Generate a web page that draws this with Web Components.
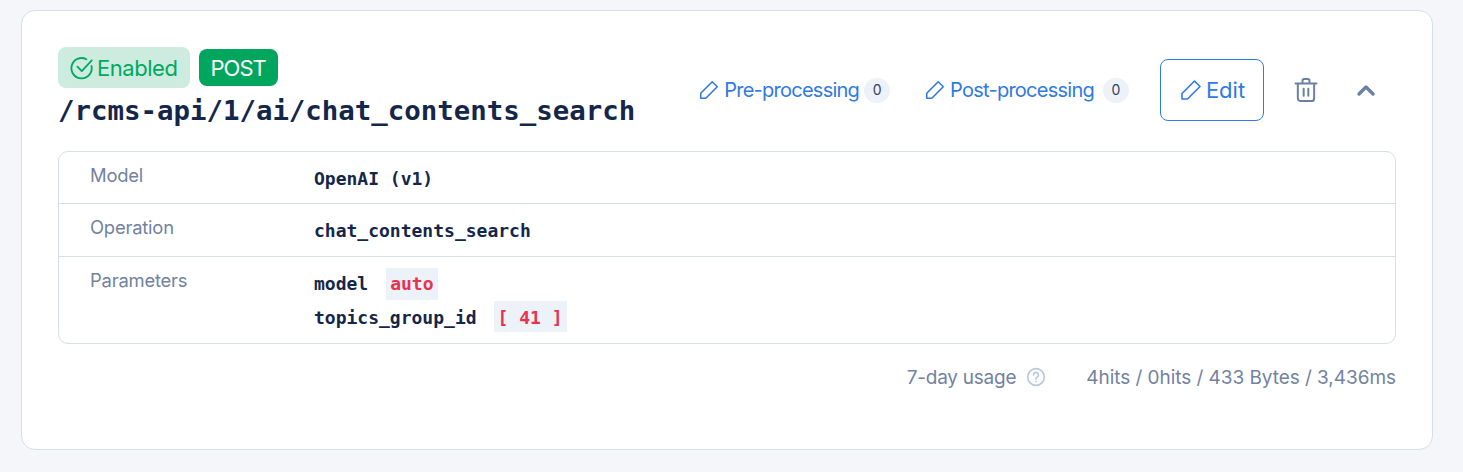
<!DOCTYPE html>
<html><head><meta charset="utf-8"><style>
html,body{margin:0;padding:0;background:#f5f6fa;height:472px;overflow:hidden}
body{font-family:"Inter","Noto Sans",sans-serif;color:#14274a}
</style></head><body>
<template id="t-icon"><style>:host{display:inline-flex;line-height:0}svg{display:block;fill:none;stroke:currentColor;stroke-linecap:round;stroke-linejoin:round}</style><svg></svg></template>
<script>
const ICONS={
 pencil:'<path d="M3 21v-5.5L15.5 3 21 8.5 8.5 21z"/>',
 check:'<path d="M20.8 10.2A9.4 9.4 0 1 1 16 3.9"/><path d="M7.8 10.8l4 4L21 5"/>',
 trash:'<path d="M3 6.5h18M9 6.5V4a1.5 1.5 0 0 1 1.5-1.5h3A1.5 1.5 0 0 1 15 4v2.5M5 6.5V19a2.5 2.5 0 0 0 2.5 2.5h9a2.5 2.5 0 0 0 2.5-2.5V6.5M10 11v6M14 11v6"/>',
 chev:'<path d="M5 16l7-7 7 7"/>',
 help:'<circle cx="12" cy="12" r="10"/><path d="M9 9.5a3 3 0 1 1 4.6 2.5c-1 .6-1.6 1.2-1.6 2.3M12 17.6v.1"/>'
};
class XIcon extends HTMLElement{connectedCallback(){if(this.shadowRoot)return;const r=this.attachShadow({mode:'open'});r.append(document.getElementById('t-icon').content.cloneNode(true));const s=r.querySelector('svg');const z=this.getAttribute('size')||20;s.setAttribute('width',z);s.setAttribute('height',z);s.setAttribute('viewBox','0 0 24 24');s.setAttribute('stroke-width',this.getAttribute('sw')||2);s.innerHTML=ICONS[this.getAttribute('name')];}}
customElements.define('x-icon',XIcon);
function def(tag,html){customElements.define(tag,class extends HTMLElement{constructor(){super();this.attachShadow({mode:'open'}).innerHTML=html;}});}
const SANS='"Inter","Noto Sans",sans-serif';
const MONO='"DejaVu Sans Mono",monospace';
def('x-page',`<style>:host{display:block;padding:10px 30px 22px 21px}</style><slot></slot>`);
def('x-card',`<style>:host{display:block;box-sizing:border-box;height:440px;background:#fff;border:1px solid #d6deea;border-radius:14px;padding:36px 36px 0}</style><slot></slot>`);
def('x-head',`<style>:host{display:flex;align-items:flex-start;justify-content:space-between;height:104px}.l{display:flex;flex-direction:column}.b{display:flex;align-items:center;gap:9px}.a{display:flex;align-items:center;margin-top:12px}</style><div class="l"><div class="b"><slot name="badges"></slot></div><slot name="title"></slot></div><div class="a"><slot></slot></div>`);
def('x-status',`<style>:host{display:inline-flex;align-items:center;gap:2px;height:41px;padding:0 12px 0 11px;box-sizing:border-box;background:#cdecdf;color:#00a862;border-radius:8px;font:22px/1 ${SANS};letter-spacing:-.45px}</style><slot></slot>`);
def('x-method',`<style>:host{display:inline-flex;align-items:center;height:37px;padding:0 12px;box-sizing:border-box;background:#00a65e;color:#fff;border-radius:8px;font:22px/1 ${SANS};letter-spacing:-1px}</style><slot></slot>`);
def('x-title',`<style>:host{display:block;margin-top:3px;font:700 27.4px/40px ${MONO};color:#14274a;white-space:nowrap}</style><slot></slot>`);
def('x-proc',`<style>:host{display:inline-flex;align-items:center;color:#2f7ae5;font:20px/1 ${SANS};letter-spacing:-.75px;gap:4px;margin-right:34px}.n{display:inline-flex;align-items:center;justify-content:center;min-width:26px;height:25px;margin-left:var(--nm,1px);border-radius:13px;background:#edf1f8;color:#33415c;font:14px/1 ${SANS};letter-spacing:0}</style><slot></slot><span class="n"><slot name="n"></slot></span>`);
def('x-edit',`<style>:host{display:inline-flex;align-items:center;justify-content:center;gap:3px;width:104px;height:62px;box-sizing:border-box;border:1px solid #2f7ae5;border-radius:8px;color:#2f7ae5;font:22px/1 ${SANS};letter-spacing:0;margin-right:28px}</style><slot></slot>`);
def('x-table',`<style>:host{display:block;border:1px solid #d6deea;border-radius:10px}</style><slot></slot>`);
def('x-row',`<style>:host{display:grid;grid-template-columns:224px 1fr;box-sizing:border-box;padding-left:31px;border-bottom:1px solid #d6deea}:host(:last-child){border-bottom:0}.k{color:#73829f;font:18.4px/1 ${SANS};letter-spacing:-.2px;padding-top:14px}.v{font:700 18px/1 ${MONO};color:#14274a;padding-top:18px}</style><div class="k"><slot name="k"></slot></div><div class="v"><slot></slot></div>`);
def('x-param',`<style>:host{display:flex;align-items:center;height:33px;gap:18px;font:700 18px/1 ${MONO};white-space:pre}</style><slot></slot>`);
def('x-val',`<style>:host{display:inline-flex;align-items:center;height:32px;padding:0 4px;background:#edf1f8;color:#e8304f}</style><slot></slot>`);
def('x-usage',`<style>:host{display:flex;justify-content:flex-end;align-items:center;gap:40px;margin-top:21px;height:24px;color:#73829f;font:19px/1 ${SANS};letter-spacing:-.05px}.i{display:flex;align-items:center;gap:10px;letter-spacing:-.25px}</style><div class="i"><slot name="label"></slot></div><slot></slot>`);
</script>
<x-page><x-card>
 <x-head>
  <x-status slot="badges"><x-icon name="check" size="26" sw="1.7"></x-icon>Enabled</x-status>
  <x-method slot="badges">POST</x-method>
  <x-title slot="title">/rcms-api/1/ai/chat_contents_search</x-title>
  <x-proc><x-icon name="pencil" size="22" sw="1.7"></x-icon>Pre-processing<span slot="n">0</span></x-proc>
  <x-proc style="margin-right:31px;--nm:5px"><x-icon name="pencil" size="22" sw="1.7"></x-icon>Post-processing<span slot="n">0</span></x-proc>
  <x-edit><x-icon name="pencil" size="24" sw="1.6"></x-icon>Edit</x-edit>
  <x-icon name="trash" size="28" sw="1.7" style="color:#6b80a3;margin-right:34px"></x-icon>
  <x-icon name="chev" size="24" sw="3.4" style="color:#6b80a3;margin-right:18px"></x-icon>
 </x-head>
 <x-table>
  <x-row style="height:52px"><span slot="k">Model</span>OpenAI (v1)</x-row>
  <x-row style="height:53px"><span slot="k">Operation</span>chat_contents_search</x-row>
  <x-row style="height:86px"><span slot="k">Parameters</span>
    <x-param style="margin-top:-8px">model<x-val>auto</x-val></x-param>
    <x-param style="margin-top:1px;gap:17px">topics_group_id<x-val style="height:28px;padding-top:3px;align-self:flex-start">[ 41 ]</x-val></x-param>
  </x-row>
 </x-table>
 <x-usage><span slot="label">7-day usage</span><x-icon slot="label" name="help" size="20" sw="2" style="color:#b9c8de"></x-icon>4hits / 0hits / 433 Bytes / 3,436ms</x-usage>
</x-card></x-page>
</body></html>
